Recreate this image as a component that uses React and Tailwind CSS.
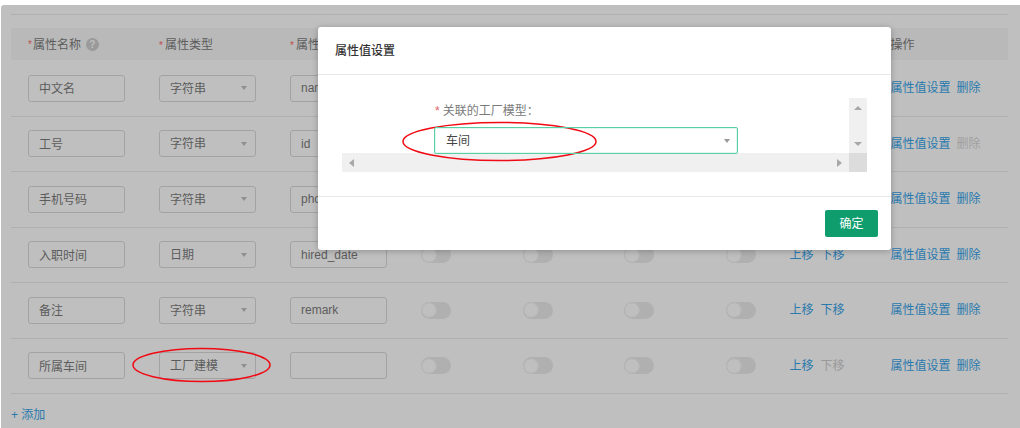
const font = { fontFamily: '"Liberation Sans","Noto Sans CJK SC",sans-serif' };

const rows = [
  { name: '中文名', type: '字符串', key: 'name' },
  { name: '工号', type: '字符串', key: 'id', noDelete: true },
  { name: '手机号码', type: '字符串', key: 'phone' },
  { name: '入职时间', type: '日期', key: 'hired_date' },
  { name: '备注', type: '字符串', key: 'remark' },
  { name: '所属车间', type: '工厂建模', key: '', noDown: true },
];

const Caret = ({ className = 'text-[#8f8f8f]' }) => (
  <svg width="6" height="4" viewBox="0 0 6 4" className={className}>
    <path d="M0 0h6L3 4z" fill="currentColor" />
  </svg>
);

function Toggle() {
  return (
    <div className="w-[30px] h-[17px] rounded-full bg-[#b0b0b0] flex items-center pl-px">
      <div className="w-[14px] h-[14px] rounded-full bg-[#bfbfbf] outline outline-1 outline-[#b6b6b6]" />
    </div>
  );
}

function Row({ r }) {
  return (
    <div className="h-[55.5px] shrink-0 border-b border-[#b0b0b0] grid grid-cols-[131px_131px_131px_101.5px_101.5px_101.5px_64px_101px_1fr] items-center pl-[17px] text-[12px] text-[#5c5c5c]">
      <div className="w-[97px] h-[27px] border border-[#a3a3a3] rounded-[3px] flex items-center pl-[10px] pt-[2px]">{r.name}</div>
      <div className="w-[97px] h-[27px] border border-[#a3a3a3] rounded-[3px] flex items-center justify-between pl-[10px] pr-[8px]">
        <span className="pt-px">{r.type}</span>
        <Caret />
      </div>
      <div className="w-[97px] h-[27px] border border-[#a3a3a3] rounded-[3px] flex items-center pl-[10px]">{r.key}</div>
      <Toggle />
      <Toggle />
      <Toggle />
      <Toggle />
      <div className="flex gap-[7px] text-[#2a7aae]">
        <span>上移</span>
        <span className={r.noDown ? 'text-[#9a9a9a]' : ''}>下移</span>
      </div>
      <div className="flex gap-[6px] text-[#2a7aae]">
        <span>属性值设置</span>
        <span className={r.noDelete ? 'text-[#9f9f9f]' : ''}>删除</span>
      </div>
    </div>
  );
}

function Modal() {
  return (
    <div className="absolute left-[317px] top-[22px] w-[573px] h-[223px] bg-white rounded-[3px] shadow-[0_1px_6px_rgba(0,0,0,0.25)] flex flex-col">
      <div className="h-[48px] shrink-0 border-b border-[#e8e8e8] pl-[17px] flex items-center text-[12px] font-medium text-[#333]">属性值设置</div>
      <div className="h-[122px] shrink-0 border-b border-[#e8e8e8] pt-[23px] px-[24px]">
        <div className="grid grid-cols-[1fr_18px] grid-rows-[55px_19px] h-[74px]">
          <div className="pl-[92px] pt-[5px] relative z-10">
            <div className="h-[16px] text-[12px] text-[#7a7a7a] flex items-center pl-px">
              <span className="text-[#e0606a] mr-[3px]">*</span>关联的工厂模型：
            </div>
            <div className="mt-[8px] w-[304px] h-[27px] border border-[#58d0a4] rounded-[2px] flex items-center justify-between pl-[11px] pr-[7px] text-[12px] text-[#444] shadow-[inset_0_0_0_1px_rgba(88,208,164,0.18)]">
              <span>车间</span>
              <Caret className="text-[#999]" />
            </div>
          </div>
          <div className="bg-[#f0f0f0] flex flex-col items-center justify-between pt-[8px] pb-[7px]">
            <svg width="8" height="4" viewBox="0 0 8 4" className="text-[#a8a8a8]"><path d="M0 4h8L4 0z" fill="currentColor" /></svg>
            <svg width="8" height="4" viewBox="0 0 8 4" className="text-[#a8a8a8]"><path d="M0 0h8L4 4z" fill="currentColor" /></svg>
          </div>
          <div className="bg-[#f0f0f0] flex items-center justify-between pl-[7px] pr-[7px]">
            <svg width="5" height="8" viewBox="0 0 5 8" className="text-[#a8a8a8]"><path d="M5 0v8L0 4z" fill="currentColor" /></svg>
            <svg width="5" height="8" viewBox="0 0 5 8" className="text-[#a8a8a8]"><path d="M0 0v8L5 4z" fill="currentColor" /></svg>
          </div>
          <div className="bg-[#dcdcdc]" />
        </div>
      </div>
      <div className="flex-1 flex items-center justify-end pr-[13px]">
        <div className="w-[53px] h-[27px] rounded-[2px] bg-[#0f9d6e] text-white text-[12px] flex items-center justify-center">确定</div>
      </div>
    </div>
  );
}

export default function App() {
  return (
    <div className="w-[1020px] h-[428px] bg-white overflow-hidden pt-[5px] pl-px" style={font}>
      <div className="relative h-[423px] bg-[#bfbfbf] rounded-tl-[3px] pl-[10px] pr-[12px] pt-[9px] flex flex-col overflow-hidden">
        <div className="border-t border-[#b0b0b0] h-[14px] shrink-0" />
        <div className="h-[32px] mb-px pt-px shrink-0 bg-[#b9b9b9] grid grid-cols-[131px_131px_131px_101.5px_101.5px_101.5px_64px_101px_1fr] items-center pl-[17px] text-[12px] text-[#5c5c5c]">
          <div className="flex items-center">
            <span className="text-[#c0504d] text-[10px] mr-px">*</span>属性名称
            <span className="ml-[5px] w-[13px] h-[13px] rounded-full bg-[#9a9a9a] text-[#bfbfbf] text-[10px] font-bold flex items-center justify-center">?</span>
          </div>
          <div><span className="text-[#c0504d] text-[10px] mr-[2px]">*</span>属性类型</div>
          <div><span className="text-[#c0504d] text-[10px] mr-[2px]">*</span>属性名</div>
          <div /><div /><div /><div /><div />
          <div>操作</div>
        </div>
        {rows.map((r) => <Row key={r.name} r={r} />)}
        <div className="pt-[13px] text-[12px] leading-[16px] text-[#2a7aae]">+ 添加</div>
        <Modal />
        <svg className="absolute left-[130px] top-[342px]" width="141" height="36" viewBox="0 0 141 36">
          <ellipse cx="70.5" cy="18" rx="68.5" ry="16.5" fill="none" stroke="#f00a14" strokeWidth="1.5" />
        </svg>
        <svg className="absolute left-[400px] top-[116px]" width="198" height="41" viewBox="0 0 198 41">
          <ellipse cx="98.5" cy="20.5" rx="96.5" ry="19" fill="none" stroke="#f00a14" strokeWidth="1.5" />
        </svg>
      </div>
    </div>
  );
}
